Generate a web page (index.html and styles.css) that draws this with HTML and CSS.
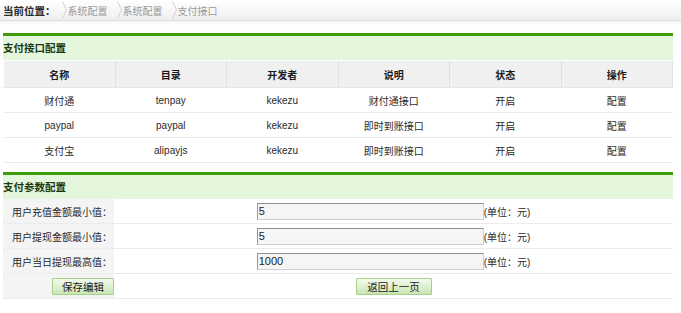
FILE: index.html
```html
<!DOCTYPE html>
<html lang="zh">
<head>
<meta charset="utf-8">
<title>支付接口</title>
<link rel="stylesheet" href="styles.css">
</head>
<body>
<div class="crumbs">
  <span class="crumb-label">当前位置：</span>
  <span class="sep"><svg width="5" height="18" viewBox="0 0 5 18"><polyline points="0.5,0.5 4.5,9 0.5,17.5" fill="none" stroke="#d0d0d0" stroke-width="1"/></svg></span>
  <span class="crumb">系统配置</span>
  <span class="sep"><svg width="5" height="18" viewBox="0 0 5 18"><polyline points="0.5,0.5 4.5,9 0.5,17.5" fill="none" stroke="#d0d0d0" stroke-width="1"/></svg></span>
  <span class="crumb">系统配置</span>
  <span class="sep"><svg width="5" height="18" viewBox="0 0 5 18"><polyline points="0.5,0.5 4.5,9 0.5,17.5" fill="none" stroke="#d0d0d0" stroke-width="1"/></svg></span>
  <span class="crumb">支付接口</span>
</div>

<div class="main">
  <section class="panel">
    <h2 class="panel-title">支付接口配置</h2>
    <table class="list">
      <thead>
        <tr><th>名称</th><th>目录</th><th>开发者</th><th>说明</th><th>状态</th><th>操作</th></tr>
      </thead>
      <tbody>
        <tr><td>财付通</td><td>tenpay</td><td>kekezu</td><td>财付通接口</td><td>开启</td><td>配置</td></tr>
        <tr><td>paypal</td><td>paypal</td><td>kekezu</td><td>即时到账接口</td><td>开启</td><td>配置</td></tr>
        <tr><td>支付宝</td><td>alipayjs</td><td>kekezu</td><td>即时到账接口</td><td>开启</td><td>配置</td></tr>
      </tbody>
    </table>
  </section>

  <section class="panel second">
    <h2 class="panel-title">支付参数配置</h2>
    <table class="form">
      <tbody>
        <tr><th>用户充值金额最小值：</th><td><input class="field" type="text" value="5"><span class="unit">(单位：元)</span></td></tr>
        <tr><th>用户提现金额最小值：</th><td><input class="field" type="text" value="5"><span class="unit">(单位：元)</span></td></tr>
        <tr><th>用户当日提现最高值：</th><td><input class="field" type="text" value="1000"><span class="unit">(单位：元)</span></td></tr>
        <tr class="actions"><th><button class="btn" type="button">保存编辑</button></th><td><button class="btn wide" type="button">返回上一页</button></td></tr>
      </tbody>
    </table>
  </section>
</div>
</body>
</html>
```

FILE: styles.css
```css
html, body {
  margin: 0;
  padding: 0;
  background: #fff;
  font-family: "Liberation Sans", "Noto Sans CJK SC", sans-serif;
  font-size: 10px;
  color: #2a2a2a;
}

.crumbs {
  display: flex;
  align-items: center;
  height: 20px;
  padding-left: 3px;
  background: linear-gradient(#ffffff, #efefef);
  border-bottom: 1px solid #dcdcdc;
  box-shadow: 0 2px 3px rgba(0,0,0,0.05);
}
.crumb-label {
  font-weight: bold;
  color: #2a2a2a;
  font-size: 10.5px;
}
.sep {
  display: flex;
  margin: 0 1px 0 6px;
}
.crumb {
  color: #9a9a9a;
  margin-right: 3px;
}

.main {
  padding: 12px 8px 0 3px;
}

.panel-title {
  margin: 0;
  height: 24px;
  line-height: 24px;
  font-size: 10.5px;
  font-weight: bold;
  color: #1d3a0c;
  background: #e4f6dc;
  border-top: 3px solid #3f9c0b;
}

.second {
  margin-top: 9px;
}

table {
  width: 100%;
  border-collapse: collapse;
}

.list {
  table-layout: fixed;
  margin-top: 1px;
}
.list th {
  height: 26px;
  background: #f0f0f0;
  font-weight: bold;
  color: #1a1a1a;
  border-left: 1px solid #fff;
  border-right: 1px solid #e0e0e0;
  border-bottom: 1px solid #e6e6e6;
  padding: 0;
}
.list td {
  height: 24px;
  text-align: center;
  border-bottom: 1px solid #ececec;
  padding: 0;
}

.form th {
  width: 109px;
  height: 24px;
  background: #f4f4f4;
  text-align: right;
  font-weight: normal;
  color: #2a2a2a;
  padding: 0 2px 0 0;
  white-space: nowrap;
  border-bottom: 1px solid #ececec;
}
.form td {
  text-align: center;
  border-bottom: 1px solid #ececec;
  padding: 0;
  white-space: nowrap;
}
.field {
  box-sizing: border-box;
  width: 227px;
  height: 17px;
  padding: 0 1px;
  margin: 0;
  vertical-align: middle;
  font-family: "Liberation Sans", sans-serif;
  font-size: 11px;
  color: #222;
  background: #f5f5f5;
  border: 1px solid #cfcfcf;
  border-top-color: #8f8f8f;
  border-left-color: #9a9a9a;
}
.unit {
  vertical-align: middle;
}

.btn {
  box-sizing: border-box;
  width: 62px;
  height: 17px;
  padding: 0;
  font-family: "Noto Sans CJK SC", sans-serif;
  font-size: 10.5px;
  line-height: 15px;
  color: #222;
  background: linear-gradient(#f3faee, #c8e6b3);
  border: 1px solid #a6d18a;
  border-radius: 1px;
  vertical-align: middle;
}
.btn.wide {
  width: 76px;
}
.actions th {
  padding-right: 0;
}
```
